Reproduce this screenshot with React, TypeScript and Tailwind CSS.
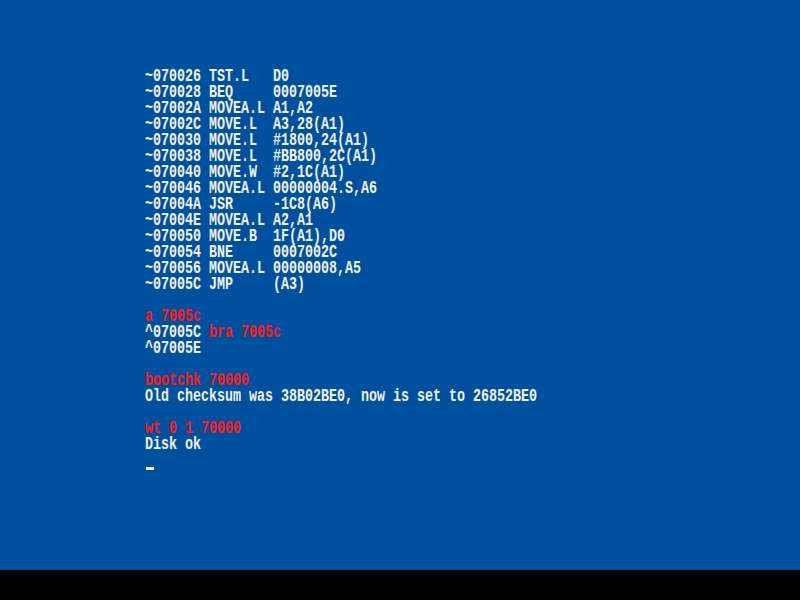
const W = "text-[#f2f2f2]";
const R = "text-[#ff1a1a]";

type Seg = { t: string; c: string };

const lines: Seg[][] = [
  [{ t: "~070026 TST.L   D0", c: W }],
  [{ t: "~070028 BEQ     0007005E", c: W }],
  [{ t: "~07002A MOVEA.L A1,A2", c: W }],
  [{ t: "~07002C MOVE.L  A3,28(A1)", c: W }],
  [{ t: "~070030 MOVE.L  #1800,24(A1)", c: W }],
  [{ t: "~070038 MOVE.L  #BB800,2C(A1)", c: W }],
  [{ t: "~070040 MOVE.W  #2,1C(A1)", c: W }],
  [{ t: "~070046 MOVEA.L 00000004.S,A6", c: W }],
  [{ t: "~07004A JSR     -1C8(A6)", c: W }],
  [{ t: "~07004E MOVEA.L A2,A1", c: W }],
  [{ t: "~070050 MOVE.B  1F(A1),D0", c: W }],
  [{ t: "~070054 BNE     0007002C", c: W }],
  [{ t: "~070056 MOVEA.L 00000008,A5", c: W }],
  [{ t: "~07005C JMP     (A3)", c: W }],
  [],
  [{ t: "a 7005c", c: R }],
  [
    { t: "^07005C ", c: W },
    { t: "bra 7005c", c: R },
  ],
  [{ t: "^07005E", c: W }],
  [],
  [{ t: "bootchk 70000", c: R }],
  [{ t: "Old checksum was 38B02BE0, now is set to 26852BE0", c: W }],
  [],
  [{ t: "wt 0 1 70000", c: R }],
  [{ t: "Disk ok", c: W }],
];

export default function App() {
  return (
    <div className="w-[800px] h-[600px] flex flex-col bg-black">
      <div className="h-[570px] bg-[#0050a0] pt-[68px] pl-[145px] flex flex-col">
        {lines.map((segs, i) => (
          <div key={i} className="h-4 flex items-center">
            <span
              className="inline-block whitespace-pre text-[13.34px] leading-[11px] font-bold scale-y-[1.35] origin-center"
              style={{ fontFamily: '"Liberation Mono", "DejaVu Sans Mono", monospace' }}
            >
              {segs.map((s, j) => (
                <span key={j} className={s.c}>
                  {s.t}
                </span>
              ))}
            </span>
          </div>
        ))}
        <div className="h-4 flex items-end pl-px">
          <div className="w-2 h-[3px] bg-[#f2f2f2] mb-[-2px]" />
        </div>
      </div>
      <div className="h-[30px] bg-black" />
    </div>
  );
}
